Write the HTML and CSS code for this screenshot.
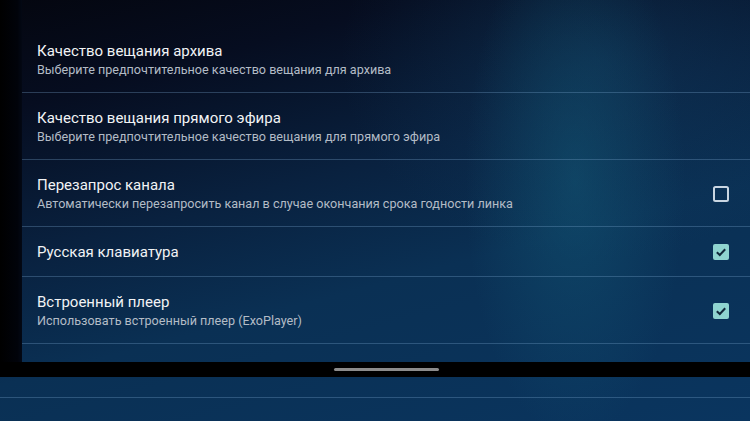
FILE: index.html
```html
<!DOCTYPE html>
<html lang="ru">
<head>
<meta charset="utf-8">
<link rel="stylesheet" href="styles.css">
</head>
<body>
<div class="screen">
  <div class="main">
    <div class="gutter"></div>
    <div class="list">
      <div class="row">
        <div class="text">
          <div class="title">Качество вещания архива</div>
          <div class="sub">Выберите предпочтительное качество вещания для архива</div>
        </div>
      </div>
      <div class="row">
        <div class="text">
          <div class="title">Качество вещания прямого эфира</div>
          <div class="sub">Выберите предпочтительное качество вещания для прямого эфира</div>
        </div>
      </div>
      <div class="row">
        <div class="text">
          <div class="title">Перезапрос канала</div>
          <div class="sub">Автоматически перезапросить канал в случае окончания срока годности линка</div>
        </div>
        <svg class="check" width="16" height="16" viewBox="0 0 16 16"><rect x="1" y="1" width="14" height="14" rx="1.5" fill="none" stroke="#c9d6e2" stroke-width="2"/></svg>
      </div>
      <div class="row single">
        <div class="text">
          <div class="title">Русская клавиатура</div>
        </div>
        <svg class="check" width="16" height="16" viewBox="0 0 16 16"><rect x="0" y="0" width="16" height="16" rx="2" fill="#8fd4d0"/><path d="M3.8 8.3 L6.8 11 L12.2 5.2" fill="none" stroke="#11283a" stroke-width="2"/></svg>
      </div>
      <div class="row">
        <div class="text">
          <div class="title">Встроенный плеер</div>
          <div class="sub">Использовать встроенный плеер (ExoPlayer)</div>
        </div>
        <svg class="check" width="16" height="16" viewBox="0 0 16 16"><rect x="0" y="0" width="16" height="16" rx="2" fill="#8fd4d0"/><path d="M3.8 8.3 L6.8 11 L12.2 5.2" fill="none" stroke="#11283a" stroke-width="2"/></svg>
      </div>
    </div>
  </div>
  <div class="navbar"><div class="handle"></div></div>
  <div class="bottom"><div class="bottom-row"></div></div>
</div>
</body>
</html>
```

FILE: styles.css
```css
html, body {
  margin: 0;
  padding: 0;
}
body {
  width: 750px;
  height: 421px;
  overflow: hidden;
  font-family: Roboto, "Noto Sans", sans-serif;
  background:
    radial-gradient(ellipse 110px 260px at 575px 180px, rgba(20, 95, 125, 0.45), rgba(20, 95, 125, 0)),
    radial-gradient(ellipse 260px 200px at 600px 60px, rgba(20, 70, 110, 0.35), rgba(20, 70, 110, 0)),
    linear-gradient(165deg, #04060f 0%, #060d20 18%, #09213f 42%, #0a3054 62%, #0a355f 100%);
}
.screen {
  display: flex;
  flex-direction: column;
  height: 421px;
}
.main {
  display: flex;
  height: 362px;
}
.gutter {
  width: 22px;
  background: linear-gradient(to right, #000 0%, #01030a 80%, #030814 100%);
}
.list {
  flex: 1;
  padding-top: 26px;
}
.row {
  display: flex;
  align-items: center;
  padding: 15px 21px 13px 15px;
  border-bottom: 1px solid rgba(120, 165, 205, 0.32);
}
.row.single {
  padding-bottom: 14px;
}
.text {
  flex: 1;
}
.title {
  font-size: 15px;
  line-height: 20px;
  color: #f1f3f5;
}
.sub {
  font-size: 12.6px;
  line-height: 18px;
  color: #b3bcc6;
}
.check {
  display: block;
  flex: none;
}
.navbar {
  height: 15px;
  background: #000;
  display: flex;
  align-items: center;
  justify-content: center;
  padding-left: 22px;
}
.handle {
  width: 105px;
  height: 3px;
  border-radius: 2px;
  background: #8c8c8c;
}
.bottom {
  flex: 1;
}
.bottom-row {
  height: 20px;
  border-bottom: 1px solid rgba(120, 165, 205, 0.32);
}
```
